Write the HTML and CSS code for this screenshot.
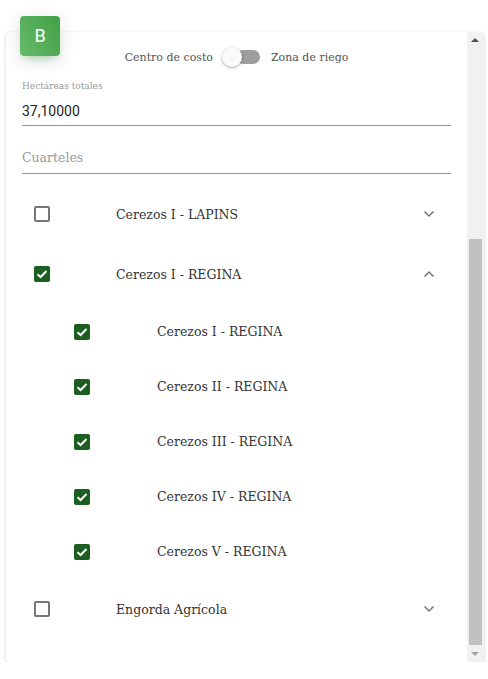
FILE: index.html
```html
<!DOCTYPE html>
<html lang="en">
<head>
    <meta charset="UTF-8">
    <meta name="viewport" content="width=device-width, initial-scale=1.0">
    <title>Cuarteles</title>
    <link rel="stylesheet" href="styles.css">
</head>
<body>
    <div class="page">
        <div class="badge">B</div>
        <div class="card">
            <div class="card-body">
                <div class="switch-row">
                    <span>Centro de costo</span>
                    <div class="switch"><div class="knob"></div></div>
                    <span>Zona de riego</span>
                </div>
                <div class="field">
                    <div class="field-label">Hectáreas totales</div>
                    <div class="field-value">37,10000</div>
                </div>
                <div class="field select">
                    <div class="placeholder">Cuarteles</div>
                </div>
                <div class="tree">
                    <div class="row">
                        <div class="check"></div>
                        <div class="name">Cerezos I - LAPINS</div>
                        <svg class="chev" width="12" height="8" viewBox="0 0 12 8"><polyline points="1.5,1.5 6,6 10.5,1.5"/></svg>
                    </div>
                    <div class="row">
                        <div class="check on"><svg width="16" height="16" viewBox="0 0 16 16"><polyline points="3.5,8.2 6.6,11 12.5,5"/></svg></div>
                        <div class="name">Cerezos I - REGINA</div>
                        <svg class="chev" width="12" height="8" viewBox="0 0 12 8"><polyline points="1.5,6.5 6,2 10.5,6.5"/></svg>
                    </div>
                    <div class="children">
                        <div class="row child">
                            <div class="check on"><svg width="16" height="16" viewBox="0 0 16 16"><polyline points="3.5,8.2 6.6,11 12.5,5"/></svg></div>
                            <div class="name">Cerezos I - REGINA</div>
                        </div>
                        <div class="row child">
                            <div class="check on"><svg width="16" height="16" viewBox="0 0 16 16"><polyline points="3.5,8.2 6.6,11 12.5,5"/></svg></div>
                            <div class="name">Cerezos II - REGINA</div>
                        </div>
                        <div class="row child">
                            <div class="check on"><svg width="16" height="16" viewBox="0 0 16 16"><polyline points="3.5,8.2 6.6,11 12.5,5"/></svg></div>
                            <div class="name">Cerezos III - REGINA</div>
                        </div>
                        <div class="row child">
                            <div class="check on"><svg width="16" height="16" viewBox="0 0 16 16"><polyline points="3.5,8.2 6.6,11 12.5,5"/></svg></div>
                            <div class="name">Cerezos IV - REGINA</div>
                        </div>
                        <div class="row child">
                            <div class="check on"><svg width="16" height="16" viewBox="0 0 16 16"><polyline points="3.5,8.2 6.6,11 12.5,5"/></svg></div>
                            <div class="name">Cerezos V - REGINA</div>
                        </div>
                    </div>
                    <div class="row">
                        <div class="check"></div>
                        <div class="name">Engorda Agrícola</div>
                        <svg class="chev" width="12" height="8" viewBox="0 0 12 8"><polyline points="1.5,1.5 6,6 10.5,1.5"/></svg>
                    </div>
                </div>
            </div>
            <div class="scrollbar">
                <div class="arrow up"></div>
                <div class="track"><div class="thumb"></div></div>
                <div class="arrow down"></div>
            </div>
        </div>
    </div>
</body>
</html>
```

FILE: styles.css
```css
*{
    margin: 0;
    padding: 0;
    box-sizing: border-box;
}
html, body{
    background-color: #fff;
    font-family: "DejaVu Serif", serif;
    color: #333;
}
.page{
    position: relative;
    padding: 32px 4px 0 6px;
}
.badge{
    position: absolute;
    top: 16px;
    left: 20px;
    width: 40px;
    height: 40px;
    border-radius: 4px;
    background: linear-gradient(60deg, #66bb6a, #43a047);
    box-shadow: 0 4px 18px rgba(0,0,0,0.12), 0 7px 10px -5px rgba(76,175,80,0.4);
    color: #fff;
    font-family: Roboto, sans-serif;
    font-size: 18px;
    line-height: 40px;
    text-align: center;
    z-index: 2;
}
.card{
    display: flex;
    height: 630px;
    background: #fff;
    border-radius: 3px;
    box-shadow: 0 1px 3px rgba(0,0,0,0.22), 0 0 1px rgba(0,0,0,0.06);
    overflow: hidden;
}
.card-body{
    flex: 1;
    padding: 14px 16px 0 16px;
}
.switch-row{
    display: flex;
    justify-content: center;
    align-items: center;
    height: 22px;
    font-size: 11px;
    color: #555;
}
.switch{
    position: relative;
    width: 38px;
    height: 22px;
    margin: 0 11px 0 9px;
}
.switch::before{
    content: "";
    position: absolute;
    left: 14px;
    top: 4px;
    width: 24px;
    height: 14px;
    border-radius: 7px;
    background: #9e9e9e;
}
.knob{
    position: absolute;
    left: 0;
    top: 1px;
    width: 20px;
    height: 20px;
    border-radius: 50%;
    background: #fafafa;
    box-shadow: 0 1px 3px rgba(0,0,0,0.35);
}
.field{
    border-bottom: 1px solid #949494;
}
.field-label{
    margin-top: 11px;
    font-size: 9px;
    line-height: 14px;
    color: #999;
}
.field-value{
    margin-top: 8px;
    padding-bottom: 4px;
    font-family: Roboto, sans-serif;
    font-size: 14px;
    line-height: 20px;
    color: #222;
}
.select{
    margin-top: 22px;
    padding-bottom: 5px;
}
.placeholder{
    font-size: 12.5px;
    line-height: 20px;
    color: #999;
}
.tree{
    margin-top: 10px;
}
.row{
    display: flex;
    align-items: center;
    height: 60px;
    padding-left: 12px;
}
.row.child{
    height: 55px;
    padding-left: 52px;
}
.check{
    width: 16px;
    height: 16px;
    border: 2px solid #777;
    border-radius: 2px;
    flex-shrink: 0;
}
.check.on{
    border: 0;
    background: #1b5e20;
}
.check svg{
    display: block;
    fill: none;
    stroke: #fff;
    stroke-width: 2;
}
.name{
    flex: 1;
    margin-left: 66px;
    font-size: 12.5px;
    color: #333;
}
.child .name{
    margin-left: 67px;
}
.chev{
    margin-right: 16px;
    fill: none;
    stroke: #757575;
    stroke-width: 1.5;
}
.scrollbar{
    width: 17px;
    display: flex;
    flex-direction: column;
    background: #f1f1f1;
}
.arrow{
    height: 17px;
    position: relative;
}
.arrow::after{
    content: "";
    position: absolute;
    left: 4px;
    border-left: 4px solid transparent;
    border-right: 4px solid transparent;
}
.arrow.up::after{
    top: 6px;
    border-bottom: 4px solid #505050;
}
.arrow.down::after{
    top: 7px;
    border-top: 4px solid #a3a3a3;
}
.track{
    flex: 1;
    display: flex;
    flex-direction: column;
    justify-content: flex-end;
    padding: 0 2px;
}
.thumb{
    height: 406px;
    background: #c1c1c1;
}
```
